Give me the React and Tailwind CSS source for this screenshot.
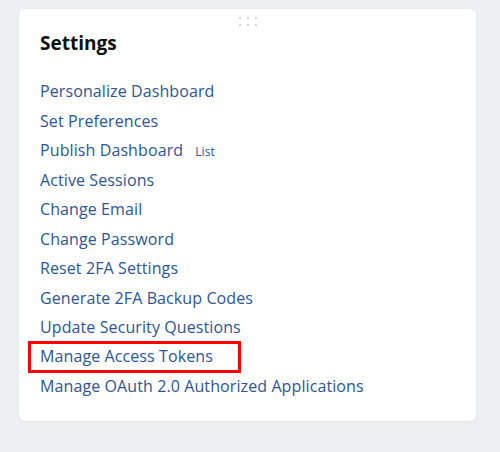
const links = [
  "Personalize Dashboard",
  "Set Preferences",
  "Publish Dashboard",
  "Active Sessions",
  "Change Email",
  "Change Password",
  "Reset 2FA Settings",
  "Generate 2FA Backup Codes",
  "Update Security Questions",
  "Manage Access Tokens",
  "Manage OAuth 2.0 Authorized Applications",
];

const App = () => {
  return (
    <div
      className="min-h-[452px] w-full bg-[#eef0f4] pt-[9px] pl-[19px] pr-[24px]"
      style={{ fontFamily: '"Open Sans", sans-serif' }}
    >
      <div className="relative h-[412px] w-[457px] rounded-md bg-white shadow-[0_1px_4px_rgba(0,0,0,0.06)] px-[21px] pt-[20px]">
        {/* drag handle */}
        <div className="absolute left-[220px] top-[8px] grid grid-cols-3 gap-x-[6px] gap-y-[5px]">
          {[0, 1, 2, 3, 4, 5].map((i) => (
            <span key={i} className="block h-[2px] w-[2px] bg-[#d4d6da]"></span>
          ))}
        </div>

        <h2 className="text-[19px] font-bold leading-[28px] text-[#111]">Settings</h2>

        <ul className="mt-[20px] tracking-[0.1px]">
          {links.map((label) =>
            label === "Manage Access Tokens" ? (
              <li key={label} className="flex h-[29.5px] items-center text-[16px]">
                <span className="-ml-[12px] block h-[32px] w-[213px] shrink-0 border-[3px] border-[#ff0000] pl-[9px] leading-[24px] text-[#2c5597]">
                  {label}
                </span>
              </li>
            ) : (
              <li key={label} className="h-[29.5px] leading-[29.5px] text-[16px]">
                <a href="#" className="text-[#2c5597]">
                  {label}
                </a>
                {label === "Publish Dashboard" && (
                  <span className="ml-[12px] text-[12px] text-[#2c5597]">List</span>
                )}
              </li>
            )
          )}
        </ul>
      </div>
    </div>
  );
};

export default App;
